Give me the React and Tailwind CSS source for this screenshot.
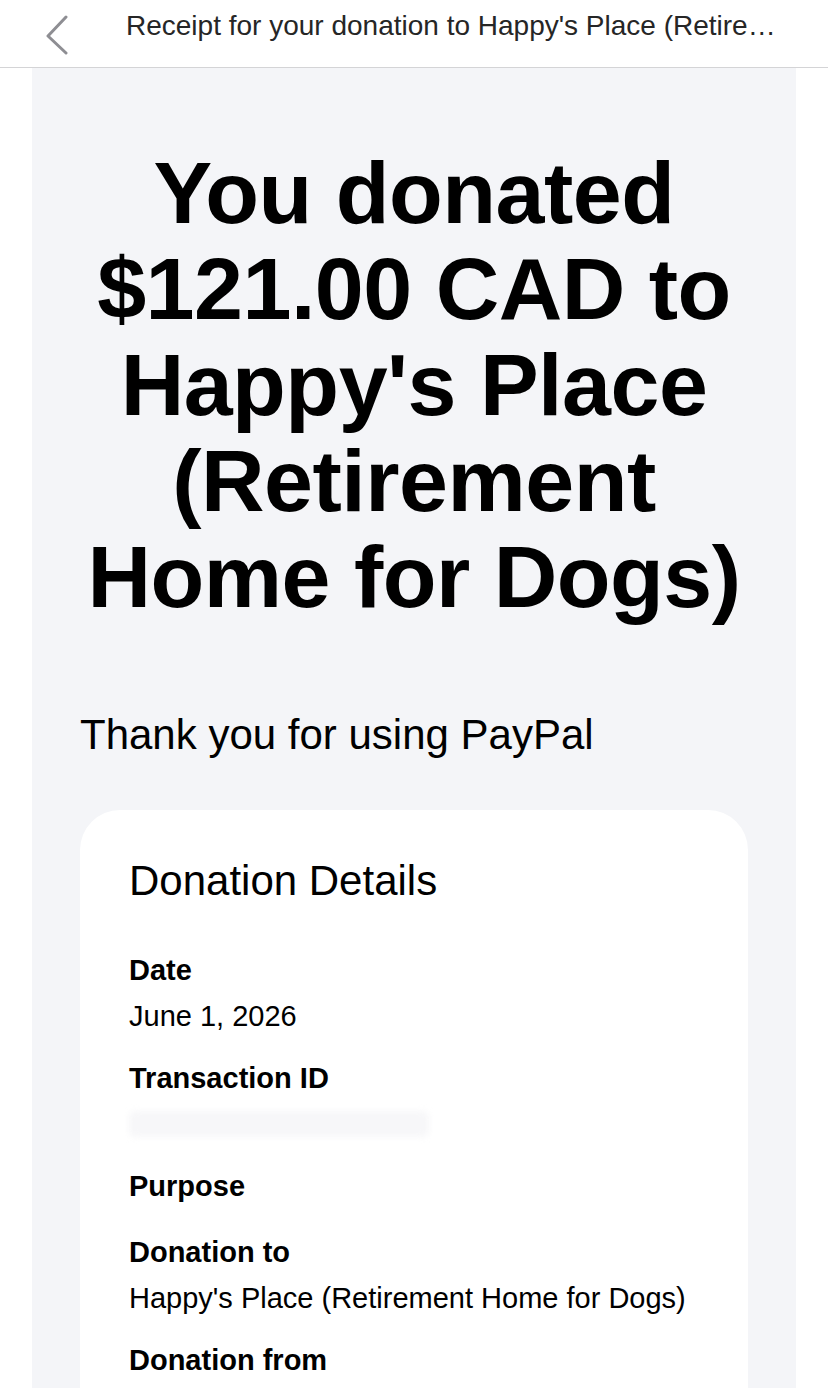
import React from 'react'

const FONT = { fontFamily: '"Liberation Sans", Arial, Helvetica, sans-serif' }

function Field({ label, value, blurred, extra }) {
  return (
    <div className={extra ? 'mb-[20px]' : 'mb-[16px]'}>
      <p className="text-[29px] leading-[46px] font-bold text-black">{label}</p>
      {value && <p className="text-[29px] leading-[46px] text-black">{value}</p>}
      {blurred && (
        <div className="h-[46px] flex items-center">
          <div className="h-[26px] w-[300px] rounded-md bg-[#f7f7f9] blur-[3px]" />
        </div>
      )}
    </div>
  )
}

export default function App() {
  return (
    <div className="min-h-screen bg-white" style={FONT}>
      {/* Top bar */}
      <div className="h-[68px] flex items-center border-b border-[#d4d4d6] bg-white">
        <div className="w-[126px] shrink-0 pl-[42px]">
          <svg width="28" height="42" viewBox="0 0 28 42" fill="none">
            <path d="M24 4L6 23L24 40" stroke="#8e8e93" strokeWidth="3" strokeLinecap="round" strokeLinejoin="round" />
          </svg>
        </div>
        <p className="text-[28px] text-[#262626] truncate w-[660px] -mt-[16px]">
          Receipt for your donation to Happy's Place (Retirement Home for Dogs)
        </p>
      </div>

      {/* Receipt body */}
      <div className="mx-[32px] w-[764px] bg-[#f4f5f8] px-[48px] pt-[77px] pb-[40px]">
        <h1 className="text-[88px] leading-[96px] font-bold text-black text-center tracking-[-0.5px]">
          You donated $121.00 CAD to Happy's Place (Retirement Home for Dogs)
        </h1>

        <p className="mt-[86px] text-[42px] leading-[48px] text-black">Thank you for using PayPal</p>

        <div className="mt-[51px] bg-white rounded-[40px] px-[49px] pt-[45px] pb-[30px]">
          <h2 className="text-[42px] leading-[52px] text-black mb-[40px]">Donation Details</h2>
          <Field label="Date" value="June 1, 2026" />
          <Field label="Transaction ID" blurred />
          <Field label="Purpose" extra />
          <Field label="Donation to" value="Happy's Place (Retirement Home for Dogs)" />
          <Field label="Donation from" />
        </div>
      </div>
    </div>
  )
}
